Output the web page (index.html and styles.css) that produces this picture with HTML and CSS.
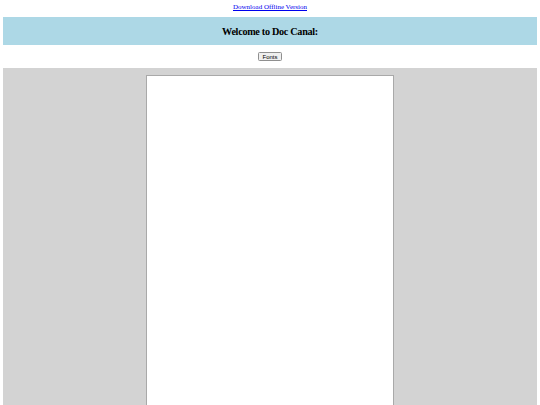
FILE: index.html
```html
<!DOCTYPE html>
<html lang="en">
<head>
<meta charset="utf-8">
<title>Doc Canal</title>
<link rel="stylesheet" href="styles.css">
</head>
<body>
<div class="top"><a class="dl" href="#">Download Offline Version</a></div>
<div class="banner"><h2 class="title">Welcome to Doc Canal:</h2></div>
<div class="toolbar"><button class="btn" type="button">Fonts</button></div>
<div class="workspace"><div class="page"></div></div>
</body>
</html>
```

FILE: styles.css
```css
html { overflow: hidden; }
body {
  margin: 0 3px;
  font-family: "Liberation Serif", "Times New Roman", serif;
  background: #fff;
}
.top {
  height: 14px;
  padding-top: 3px;
  box-sizing: border-box;
  text-align: center;
  font-size: 7px;
  line-height: 8px;
}
.dl { color: #0000ee; text-decoration: underline; }
.banner {
  margin-top: 3px;
  height: 28px;
  background: #add8e6;
  display: flex;
  align-items: center;
  justify-content: center;
}
.title {
  margin: 0;
  padding-top: 1px;
  font-size: 10.2px;
  letter-spacing: -0.3px;
  font-weight: bold;
  color: #000;
}
.toolbar {
  height: 23px;
  display: flex;
  align-items: center;
  justify-content: center;
}
.btn {
  font-family: "Liberation Sans", Arial, sans-serif;
  font-size: 6px;
  line-height: 6px;
  height: 9px;
  padding: 0 3px;
  border: 1px solid #8f8f8f;
  border-radius: 1.5px;
  background: #efefef;
  color: #000;
}
.workspace {
  height: 337px;
  padding-top: 7px;
  box-sizing: border-box;
  background: #d3d3d3;
  display: flex;
  justify-content: center;
  overflow: hidden;
}
.page {
  flex-shrink: 0;
  width: 246px;
  height: 360px;
  background: #fff;
  border: 1px solid #a9a9a9;
}
```
